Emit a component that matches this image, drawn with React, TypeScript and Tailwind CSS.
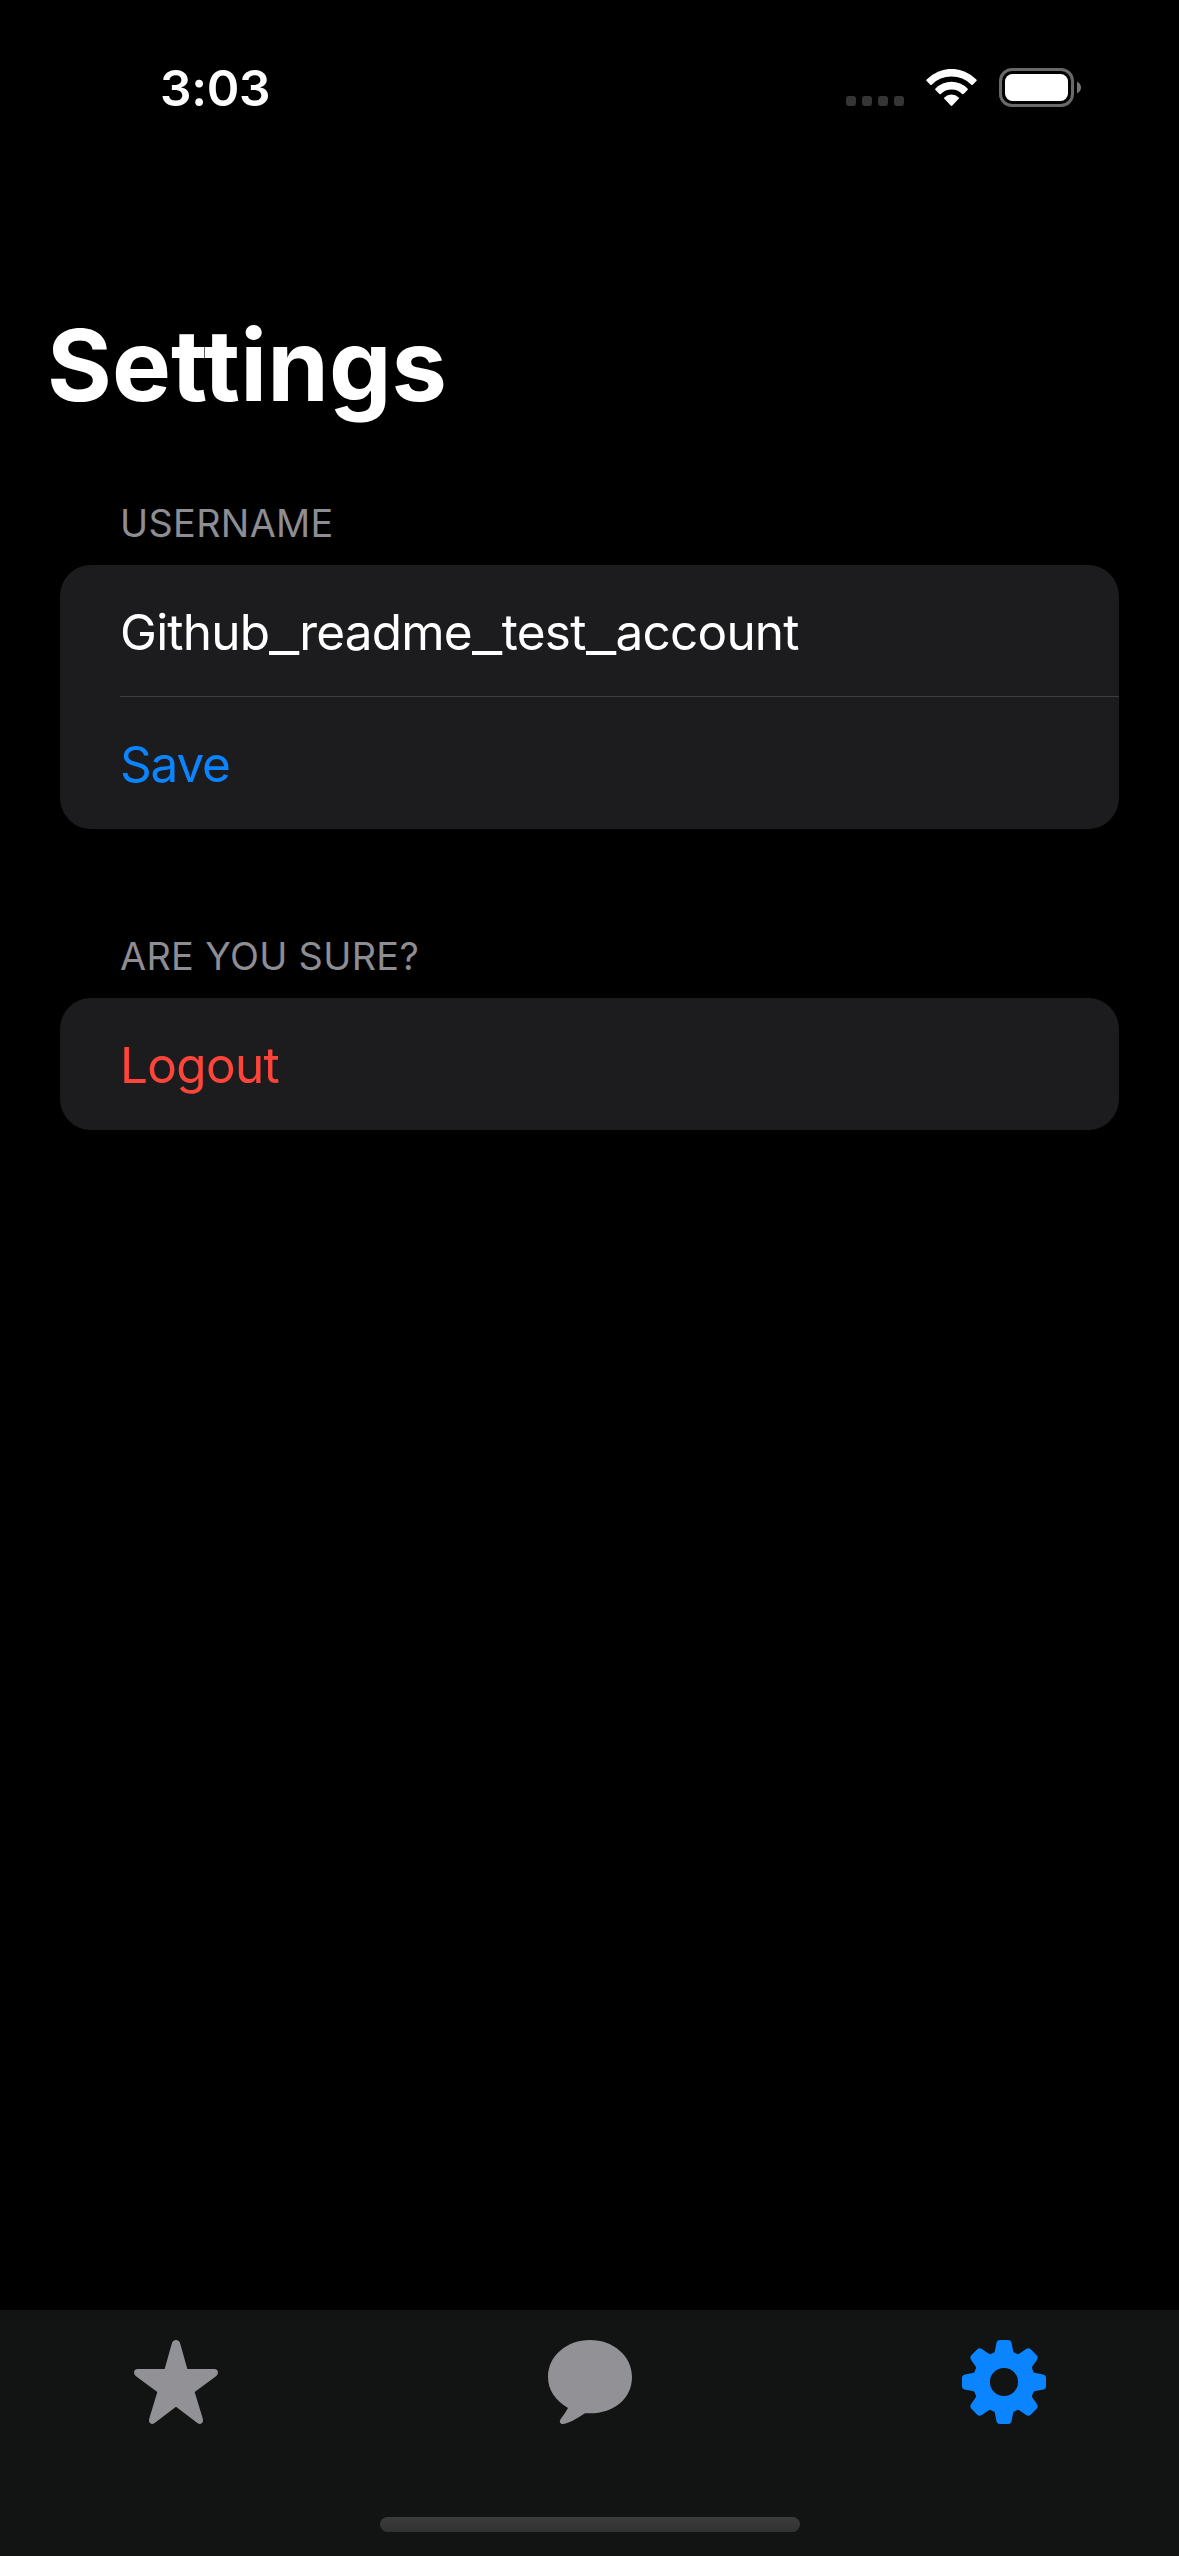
import type { ReactNode } from 'react';

function WifiIcon() {
  return (
    <svg className="h-[38px] w-[52px]" viewBox="318 56 156 114" fill="#fff" aria-label="Wi-Fi">
      <path d="M320 92a3 3 0 0 1 0-4.500A103 103 0 0 1 469 87.500a3 3 0 0 1 0 4.500l-10 10.500a3.500 3.500 0 0 1-5 .5A84 84 0 0 0 335 103a3.500 3.500 0 0 1-5-.5z" />
      <path d="M346.500 119a3 3 0 0 1 0-4.500A67 67 0 0 1 442.500 114.500a3 3 0 0 1 0 4.500l-11 11.500a3.500 3.500 0 0 1-5 .2A46 46 0 0 0 362.500 130.700a3.500 3.500 0 0 1-5-.2z" />
      <path d="M373 145.500a2.500 2.500 0 0 1 0-4A30 30 0 0 1 416 141.500a2.500 2.500 0 0 1 0 4L397 165.500a3.500 3.500 0 0 1-5 0z" />
    </svg>
  );
}

function BatteryIcon() {
  return (
    <svg className="h-[40px] w-[84px]" viewBox="0 0 84 40" aria-label="Battery">
      <rect x="1.500" y="1.500" width="72" height="36" rx="11.500" fill="none" stroke="#696969" strokeWidth="3" />
      <rect x="6" y="6" width="63" height="27" rx="7.500" fill="#fff" />
      <path d="M78 13.500q4 2.200 4 6t-4 6z" fill="#757575" />
    </svg>
  );
}

function StatusBar() {
  return (
    <header className="flex h-[128px] items-start justify-between pl-[160px] pr-[96px] text-white">
      <time className="mt-[58px] text-[49.5px] font-semibold leading-[60px] tracking-[-0.3px]">3:03</time>
      <div className="mt-[68px] flex items-start gap-[21px]">
        <div className="mr-px mt-[28px] flex gap-[6px]">
          {[0, 1, 2, 3].map((dot) => (
            <span key={dot} className="size-[10px] rounded-[3px] bg-[#353535]" />
          ))}
        </div>
        <div className="mt-px">
          <WifiIcon />
        </div>
        <BatteryIcon />
      </div>
    </header>
  );
}

function Section({ title, className, children }: { title: string; className: string; children: ReactNode }) {
  return (
    <section className={className}>
      <h2 className="mb-[19px] pl-[60px] text-[37.8px] leading-[45px] tracking-[0.35px] text-[#8d8d93]">{title}</h2>
      <div className="overflow-hidden rounded-[31px] bg-[#1c1c1e]">{children}</div>
    </section>
  );
}

function Underscore() {
  return <span className="inline-block w-[30px] origin-left translate-y-px scale-x-[1.34]">_</span>;
}

const row = 'block w-full pl-[60px] pt-px text-left text-[49.5px] leading-[132px]';

function StarIcon() {
  return (
    <svg className="size-[84px]" viewBox="42 120 252 252" fill="#919196" aria-label="Favorites">
      <path d="M134 207L155 132Q158 120 168 120T181 132L202 207H282Q294 207 294 218Q294 224 286 230L224 276L248 355Q252 371 239 372Q235 372 229 367L168 320L107 367Q101 372 97 372Q84 371 88 355L112 276L50 230Q42 224 42 218Q42 207 54 207Z" />
    </svg>
  );
}

function BubbleIcon() {
  return (
    <svg className="size-[84px]" viewBox="54 120 252 252" fill="#919196" aria-label="Messages">
      <path d="M180 120C250 120 306 168 306 231C306 296 252 340 180 340Q172 340 165 340C140 357 113 372 98 372C90 372 87 365 92 357Q107 337 114 324C76 302 54 269 54 231C54 168 110 120 180 120Z" />
    </svg>
  );
}

function GearIcon() {
  return (
    <svg className="size-[84px]" viewBox="-42 -42 84 84" fill="#0a84ff" aria-label="Settings">
      <circle r="22.600" fill="none" stroke="#0a84ff" strokeWidth="17" />
      {[0, 45, 90, 135, 180, 225, 270, 315].map((angle) => (
        <path
          key={angle}
          transform={`rotate(${angle})`}
          d="M-10.600-27.500Q-9.600-29-9-31.500L-7.800-38Q-7.200-42-4.200-42H4.200Q7.200-42 7.800-38L9-31.500Q9.600-29 10.600-27.500L8-26H-8Z"
        />
      ))}
    </svg>
  );
}

function TabBar() {
  return (
    <nav className="flex h-[246px] flex-col items-center justify-between bg-[#121413] pb-[24px] pt-[30px]">
      <div className="flex w-full justify-between pl-[134px] pr-[133px]">
        <button type="button"><StarIcon /></button>
        <button type="button"><BubbleIcon /></button>
        <button type="button"><GearIcon /></button>
      </div>
      <div className="h-[15px] w-[420px] rounded-full bg-linear-to-b from-[#3c3c3c] to-[#313131]" />
    </nav>
  );
}

export default function App() {
  return (
    <div className="flex h-[2556px] w-[1179px] flex-col bg-black font-[Inter,sans-serif]">
      <StatusBar />
      <main className="flex-1 px-[60px] pt-[177px]">
        <h1 className="-ml-[13px] text-[99px] font-bold leading-[120px] tracking-[0.1px] text-white">Settings</h1>
        <Section title="USERNAME" className="mt-[76px]">
          <div className="h-[131px] text-white">
            <p className={`${row} tracking-[-0.8px]`}>
              Github<Underscore />readme<Underscore />test<Underscore />account
            </p>
          </div>
          <div className="ml-[60px] h-px bg-[#3d3d41]" />
          <button type="button" className={`${row} h-[132px] tracking-[-1.2px] text-[#0a84ff]`}>Save</button>
        </Section>
        <Section title="ARE YOU SURE?" className="mt-[105px]">
          <button type="button" className={`${row} h-[132px] tracking-[-0.7px] text-[#ff453a]`}>Logout</button>
        </Section>
      </main>
      <TabBar />
    </div>
  );
}
